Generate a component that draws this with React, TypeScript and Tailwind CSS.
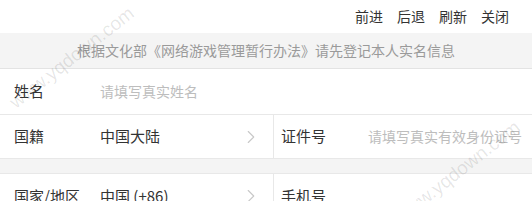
import { ChevronRight } from "lucide-react";

const font = { fontFamily: '"Noto Sans CJK SC", "Noto Sans", sans-serif' };

function Chevron() {
  return <ChevronRight className="w-[22px] h-[22px] text-[#c8c8c8]" strokeWidth={1.2} />;
}

export default function App() {
  return (
    <div className="relative w-[532px] h-[201px] overflow-hidden bg-white text-[#333]" style={font}>
      <div className="h-[33px] flex items-center justify-end gap-[14px] pr-[23px] text-[14px]">
        <span>前进</span>
        <span>后退</span>
        <span>刷新</span>
        <span>关闭</span>
      </div>
      <div className="h-[36px] bg-[#f4f4f4] border-b border-[#e3e3e3] flex items-center justify-center text-[14px] text-[#9a9a9a] whitespace-nowrap">
        根据文化部《网络游戏管理暂行办法》请先登记本人实名信息
      </div>
      <div className="h-[46px] border-b border-[#e8e8e8] flex items-center text-[15px]">
        <span className="w-[100px] pl-[14px]">姓名</span>
        <span className="text-[14px] text-[#bdbdbd]">请填写真实姓名</span>
      </div>
      <div className="h-[44px] border-b border-[#e8e8e8] flex text-[15px]">
        <div className="w-[274px] border-r border-[#e8e8e8] flex items-center">
          <span className="w-[100px] pl-[14px]">国籍</span>
          <span className="flex-1">中国大陆</span>
          <span className="pr-[11px] flex"><Chevron /></span>
        </div>
        <div className="flex-1 flex items-center whitespace-nowrap">
          <span className="w-[94px] pl-[7px]">证件号</span>
          <span className="text-[14px] text-[#bdbdbd]">请填写真实有效身份证号</span>
        </div>
      </div>
      <div className="h-[15px] bg-[#f4f4f4] border-b border-[#e8e8e8]" />
      <div className="h-[44px] flex text-[15px]">
        <div className="w-[274px] border-r border-[#e8e8e8] flex items-center">
          <span className="w-[100px] pl-[14px]">国家/地区</span>
          <span className="flex-1">中国 (+86)</span>
          <span className="pr-[11px] flex"><Chevron /></span>
        </div>
        <div className="flex-1 flex items-center">
          <span className="w-[94px] pl-[7px]">手机号</span>
        </div>
      </div>

      {/* watermarks */}
      <span
        className="pointer-events-none absolute left-[72px] top-[58px] -translate-x-1/2 -translate-y-1/2 -rotate-[38deg] whitespace-nowrap text-[19px] text-black/10"
        style={{ fontFamily: '"Liberation Sans", sans-serif' }}
      >
        www.yqdown.com
      </span>
      <span
        className="pointer-events-none absolute left-[458px] top-[172px] -translate-x-1/2 -translate-y-1/2 -rotate-[38deg] whitespace-nowrap text-[19px] text-black/10"
        style={{ fontFamily: '"Liberation Sans", sans-serif' }}
      >
        www.yqdown.com
      </span>
    </div>
  );
}
